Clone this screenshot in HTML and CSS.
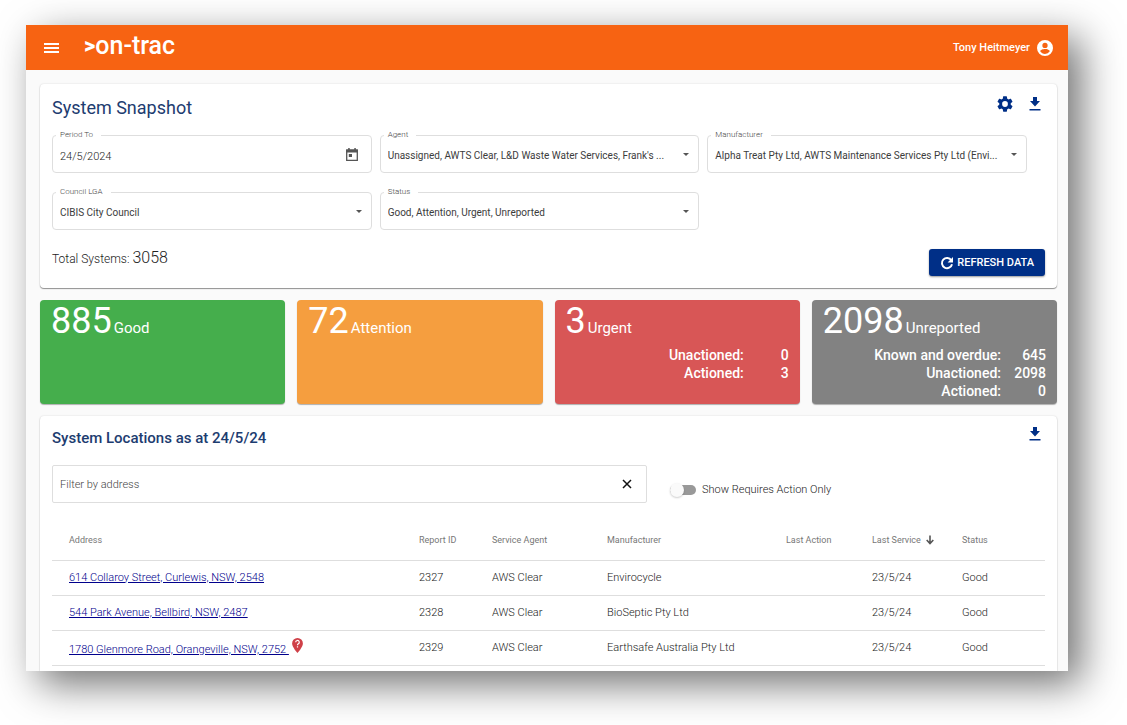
FILE: index.html
```html
<!DOCTYPE html>
<html lang="en">
<head>
<meta charset="utf-8">
<meta name="viewport" content="width=device-width, initial-scale=1">
<title>on-trac | System Snapshot</title>
<link rel="stylesheet" href="styles.css">
</head>
<body>
<div class="app">
  <header class="topbar">
    <button class="icon-btn menu" type="button" aria-label="Menu">
      <svg width="15" height="10" viewBox="0 0 15 10"><path d="M0 1h15M0 5h15M0 9h15" stroke="currentColor" stroke-width="2"/></svg>
    </button>
    <a class="logo" href="#"><span class="logo-mark">&gt;</span>on-trac</a>
    <button class="user" type="button">Tony Heitmeyer
      <svg width="16" height="16" viewBox="2 2 20 20" fill="currentColor"><path d="M12 2a10 10 0 1 0 0 20 10 10 0 0 0 0-20zm0 3.500a3.300 3.300 0 1 1 0 6.600 3.300 3.300 0 0 1 0-6.600zm0 13.900c-2.500 0-4.700-1.200-6-3.200.1-2 4-3 6-3s5.900 1 6 3a7.200 7.200 0 0 1-6 3.200z"/></svg>
    </button>
  </header>

  <main class="content">
    <section class="card snapshot">
      <div class="card-head">
        <h1 class="title">System Snapshot</h1>
        <div class="actions">
          <button class="icon-btn" type="button" aria-label="Settings">
            <svg width="16" height="16" viewBox="2 2 20 20" fill="currentColor"><path d="M19.140 12.940c.04-.3.060-.61.060-.94s-.02-.64-.07-.94l2.030-1.580c.18-.14.230-.41.120-.61l-1.920-3.320c-.12-.22-.37-.29-.59-.22l-2.390.96c-.5-.38-1.030-.7-1.620-.94L14.400 2.810A.48.48 0 0 0 13.920 2.400h-3.840c-.24 0-.43.170-.47.410l-.36 2.540c-.59.240-1.130.570-1.620.940l-2.390-.96c-.22-.08-.47 0-.59.220L2.740 8.870c-.12.210-.08.470.120.610l2.030 1.580c-.05.300-.09.630-.09.940s.02.640.070.940l-2.030 1.580c-.18.140-.23.410-.12.610l1.920 3.320c.12.220.370.290.590.220l2.390-.96c.5.380 1.030.7 1.620.940l.36 2.540c.05.240.240.410.480.410h3.840c.24 0 .44-.17.470-.41l.36-2.540c.59-.24 1.130-.56 1.620-.94l2.390.96c.22.080.470 0 .59-.22l1.920-3.320c.12-.22.070-.47-.12-.61zM12 15.600A3.600 3.600 0 1 1 12 8.400a3.600 3.600 0 0 1 0 7.200z"/></svg>
          </button>
          <button class="icon-btn" type="button" aria-label="Download snapshot">
            <svg width="12" height="14" viewBox="0 0 12 14" fill="currentColor"><path d="M4 0h4v4h3L6 9.500 1 4h3zM.5 12h11v1.400H.5z"/></svg>
          </button>
        </div>
      </div>

      <form class="filters">
        <div class="field">
          <label for="period">Period To</label>
          <input id="period" type="text" value="24/5/2024">
          <button class="icon-btn calendar" type="button" aria-label="Choose date">
            <svg width="12" height="13" viewBox="0 0 12 13"><path d="M.7 2.200h10.600v10.100H.7z" fill="none" stroke="currentColor" stroke-width="1.300"/><path d="M.2 1.600h11.600v3H.2zM2.200 0h1.500v2H2.200zM8.300 0h1.500v2H8.300zM2.800 6h3.200v3H2.800z" fill="currentColor"/></svg>
          </button>
        </div>
        <div class="field">
          <label for="agent">Agent</label>
          <select id="agent"><option>Unassigned, AWTS Clear, L&amp;D Waste Water Services, Frank's ...</option></select>
          <svg class="caret" width="6" height="3" viewBox="0 0 6 3"><path d="M0 0h6L3 3z" fill="currentColor"/></svg>
        </div>
        <div class="field">
          <label for="manufacturer">Manufacturer</label>
          <select id="manufacturer"><option>Alpha Treat Pty Ltd, AWTS Maintenance Services Pty Ltd (Envi...</option></select>
          <svg class="caret" width="6" height="3" viewBox="0 0 6 3"><path d="M0 0h6L3 3z" fill="currentColor"/></svg>
        </div>
        <div class="field">
          <label for="council">Council LGA</label>
          <select id="council"><option>CIBIS City Council</option></select>
          <svg class="caret" width="6" height="3" viewBox="0 0 6 3"><path d="M0 0h6L3 3z" fill="currentColor"/></svg>
        </div>
        <div class="field">
          <label for="status">Status</label>
          <select id="status"><option>Good, Attention, Urgent, Unreported</option></select>
          <svg class="caret" width="6" height="3" viewBox="0 0 6 3"><path d="M0 0h6L3 3z" fill="currentColor"/></svg>
        </div>
      </form>

      <div class="card-foot">
        <p class="total">Total Systems: <span class="total-value">3058</span></p>
        <button class="refresh" type="button">
          <svg width="14" height="14" viewBox="0 0 14 14"><path d="M11.300 4.200A5.100 5.100 0 1 0 12 8.200" fill="none" stroke="currentColor" stroke-width="2"/><path d="M13 1v5.400H7.600z" fill="currentColor"/></svg>
          REFRESH DATA
        </button>
      </div>
    </section>

    <section class="stats">
      <article class="stat good">
        <h2 class="stat-head"><span class="stat-value">885</span>Good</h2>
      </article>
      <article class="stat attention">
        <h2 class="stat-head"><span class="stat-value">72</span>Attention</h2>
      </article>
      <article class="stat urgent">
        <h2 class="stat-head"><span class="stat-value">3</span>Urgent</h2>
        <dl class="breakdown">
          <dt>Unactioned:</dt><dd>0</dd>
          <dt>Actioned:</dt><dd>3</dd>
        </dl>
      </article>
      <article class="stat unreported">
        <h2 class="stat-head"><span class="stat-value">2098</span>Unreported</h2>
        <dl class="breakdown">
          <dt>Known and overdue:</dt><dd>645</dd>
          <dt>Unactioned:</dt><dd>2098</dd>
          <dt>Actioned:</dt><dd>0</dd>
        </dl>
      </article>
    </section>

    <section class="card locations">
      <div class="card-head">
        <h2 class="subtitle">System Locations as at 24/5/24</h2>
        <div class="actions">
          <button class="icon-btn" type="button" aria-label="Download locations">
            <svg width="12" height="14" viewBox="0 0 12 14" fill="currentColor"><path d="M4 0h4v4h3L6 9.500 1 4h3zM.5 12h11v1.400H.5z"/></svg>
          </button>
        </div>
      </div>
      <div class="search-row">
        <div class="field search">
          <input type="text" placeholder="Filter by address" aria-label="Filter by address">
          <button class="icon-btn clear" type="button" aria-label="Clear filter">
            <svg width="10" height="10" viewBox="0 0 10 10"><path d="M1 1l8 8M9 1L1 9" stroke="currentColor" stroke-width="1.500"/></svg>
          </button>
        </div>
        <label class="toggle"><input type="checkbox" role="switch">Show Requires Action Only</label>
      </div>
      <table class="grid">
        <thead>
          <tr>
            <th>Address</th>
            <th class="c-report">Report ID</th>
            <th class="c-agent">Service Agent</th>
            <th class="c-maker">Manufacturer</th>
            <th class="c-action">Last Action</th>
            <th class="c-service">Last Service <svg class="sort" width="8" height="10" viewBox="0 0 8 10"><path d="M4 .5v8M.7 5L4 8.500 7.300 5" fill="none" stroke="currentColor" stroke-width="1.600"/></svg></th>
            <th class="c-status">Status</th>
          </tr>
        </thead>
        <tbody>
          <tr><td><a href="#">614 Collaroy Street, Curlewis, NSW, 2548</a></td><td>2327</td><td>AWS Clear</td><td>Envirocycle</td><td></td><td>23/5/24</td><td>Good</td></tr>
          <tr><td><a href="#">544 Park Avenue, Bellbird, NSW, 2487</a></td><td>2328</td><td>AWS Clear</td><td>BioSeptic Pty Ltd</td><td></td><td>23/5/24</td><td>Good</td></tr>
          <tr><td><a href="#">1780 Glenmore Road, Orangeville, NSW, 2752&nbsp;</a> <svg class="pin" width="11" height="15" viewBox="0 0 11 15"><path d="M5.500 0A5.400 5.400 0 0 0 .1 5.400C.1 9 5.500 15 5.500 15s5.400-6 5.400-9.600A5.400 5.400 0 0 0 5.500 0z" fill="#cf4048"/><path d="M3.700 4.300a1.800 1.800 0 1 1 2.700 1.500c-.6.400-.9.700-.9 1.400M5.500 8.200v1.300" fill="none" stroke="#fff" stroke-width="1.200"/></svg></td><td>2329</td><td>AWS Clear</td><td>Earthsafe Australia Pty Ltd</td><td></td><td>23/5/24</td><td>Good</td></tr>
        </tbody>
      </table>
    </section>
  </main>
</div>
</body>
</html>
```
FILE: styles.css
```css
:root {
  --orange: #f76312;
  --navy: #002f87;
  --ink: #222;
  --line: #dedede;
}

* { box-sizing: border-box; }

body {
  margin: 0;
  padding: 25px 59px 54px 26px;
  background: #fff;
  color: var(--ink);
  font-family: Roboto, "Liberation Sans", sans-serif;
  font-size: 11px;
  font-weight: 300;
  line-height: 16px;
}

h1, h2, p, dl, dd { margin: 0; }
svg { display: block; }
button, input, select { font: inherit; color: inherit; }

.app {
  overflow: hidden;
  background: #fafafa;
  box-shadow: 13px 13px 38px rgba(0, 0, 0, 0.56);
}

.icon-btn {
  display: flex;
  align-items: center;
  justify-content: center;
  padding: 0;
  border: 0;
  background: none;
  cursor: pointer;
}

/* Top bar */
.topbar {
  display: flex;
  align-items: center;
  height: 45px;
  padding: 0 15px 0 18px;
  background: var(--orange);
  color: #fff;
}

.logo {
  display: flex;
  align-items: center;
  margin-left: 25px;
  padding-bottom: 4px;
  color: #fff;
  font-size: 25px;
  font-weight: 500;
  line-height: 28px;
  text-decoration: none;
}
.logo-mark { font-size: 22px; font-weight: 900; }

.user {
  display: flex;
  align-items: center;
  gap: 7px;
  margin-left: auto;
  padding: 0;
  border: 0;
  background: none;
  font-weight: 500;
}

/* Cards */
.content {
  display: flex;
  flex-direction: column;
  gap: 12px;
  padding: 14px 11px 0 14px;
}
.card {
  padding: 12px;
  border-radius: 4px;
  background: #fff;
  box-shadow: 0 1px 1px rgba(0, 0, 0, 0.4), 0 0 2px rgba(0, 0, 0, 0.14);
}
.card-head { display: flex; justify-content: space-between; }
.title, .subtitle { color: #1d3c70; line-height: 24px; }
.title { font-size: 18px; font-weight: 400; }
.subtitle { font-size: 15px; font-weight: 500; }
.actions {
  display: flex;
  gap: 16px;
  height: 16px;
  padding-right: 4px;
  color: var(--navy);
}

/* Form fields */
.filters {
  display: grid;
  grid-template-columns: repeat(3, minmax(0, 1fr));
  gap: 19px 8px;
  padding: 15px 18px 0 0;
}
.field {
  position: relative;
  display: flex;
  align-items: center;
  height: 38px;
  border: 1px solid var(--line);
  border-radius: 4px;
}
.field label {
  position: absolute;
  top: -7px;
  left: 3px;
  padding: 0 8px 0 4px;
  background: #fff;
  color: #444;
  font-size: 8px;
  line-height: 12px;
}
.field input, .field select {
  flex: 1;
  min-width: 0;
  height: 100%;
  padding: 4px 16px 0 7px;
  border: 0;
  outline: 0;
  background: none;
  appearance: none;
  text-overflow: ellipsis;
}
.field select {
  font-size: 10px;
  font-weight: 400;
  color: #3c3c3c;
}
.caret {
  position: absolute;
  right: 9px;
  color: #555;
  pointer-events: none;
}
.calendar { margin-right: 13px; color: #555; }

.card-foot {
  display: flex;
  align-items: flex-start;
  justify-content: space-between;
  padding-top: 19px;
}
.total { font-size: 12px; line-height: 18px; }
.total-value { font-size: 16px; }
.refresh {
  display: flex;
  align-items: center;
  gap: 3px;
  height: 27px;
  padding: 0 11px;
  border: 0;
  border-radius: 3px;
  background: var(--navy);
  box-shadow: 0 1px 2px rgba(0, 0, 0, 0.4);
  color: #fff;
  font-weight: 500;
}

/* Status tiles */
.stats {
  display: grid;
  grid-template-columns: repeat(4, 1fr);
  gap: 12px;
}
.stat {
  min-height: 104px;
  padding: 0 11px;
  border-radius: 4px;
  box-shadow: 0 1px 1px rgba(0, 0, 0, 0.3);
  color: #fff;
}
.good { background: #45ae4c; }
.attention { background: #f59e3f; }
.urgent { background: #d85656; }
.unreported { background: #828282; }
.stat-head {
  display: flex;
  align-items: baseline;
  gap: 2px;
  height: 42px;
  font-size: 15px;
  font-weight: 400;
  line-height: 42px;
}
.stat-value { font-size: 36px; }
.breakdown {
  display: grid;
  grid-template-columns: 1fr 45px;
  padding-top: 4px;
  font-size: 14px;
  font-weight: 500;
  line-height: 18px;
  text-align: right;
}

/* Locations */
.locations {
  padding-top: 10px;
  padding-bottom: 5px;
  border-radius: 4px 4px 0 0;
}
.search-row {
  display: flex;
  align-items: center;
  gap: 23px;
  padding-top: 15px;
}
.search { flex: 0 1 595px; border-radius: 2px; }
.search input { padding-top: 0; }
.search input::placeholder { color: #444; opacity: 1; }
.clear { margin-right: 14px; color: #111; }
.toggle {
  display: flex;
  align-items: center;
  gap: 6px;
  padding-top: 12px;
}
.toggle input {
  display: flex;
  align-items: center;
  width: 26px;
  height: 10px;
  margin: 0;
  border-radius: 5px;
  background: #999;
  appearance: none;
}
.toggle input::before {
  content: "";
  width: 14px;
  height: 14px;
  border-radius: 50%;
  background: #fafafa;
  box-shadow: 0 1px 2px rgba(0, 0, 0, 0.2);
}

.grid {
  width: 100%;
  margin-top: 17px;
  border-collapse: collapse;
  table-layout: fixed;
}
.grid th, .grid td {
  height: 35px;
  padding: 0;
  border-bottom: 1px solid var(--line);
  text-align: left;
}
.grid th {
  height: 40px;
  color: #777;
  font-size: 9px;
  font-weight: 400;
}
.grid th:first-child, .grid td:first-child { padding-left: 17px; }
.grid a { color: #00008c; }
.c-report { width: 73px; }
.c-agent { width: 115px; }
.c-maker { width: 179px; }
.c-action { width: 86px; }
.c-service { width: 90px; }
.c-status { width: 83px; }
.sort, .pin { display: inline-block; }
.sort { margin-left: 3px; vertical-align: middle; color: #555; }
.pin { vertical-align: baseline; }
```
